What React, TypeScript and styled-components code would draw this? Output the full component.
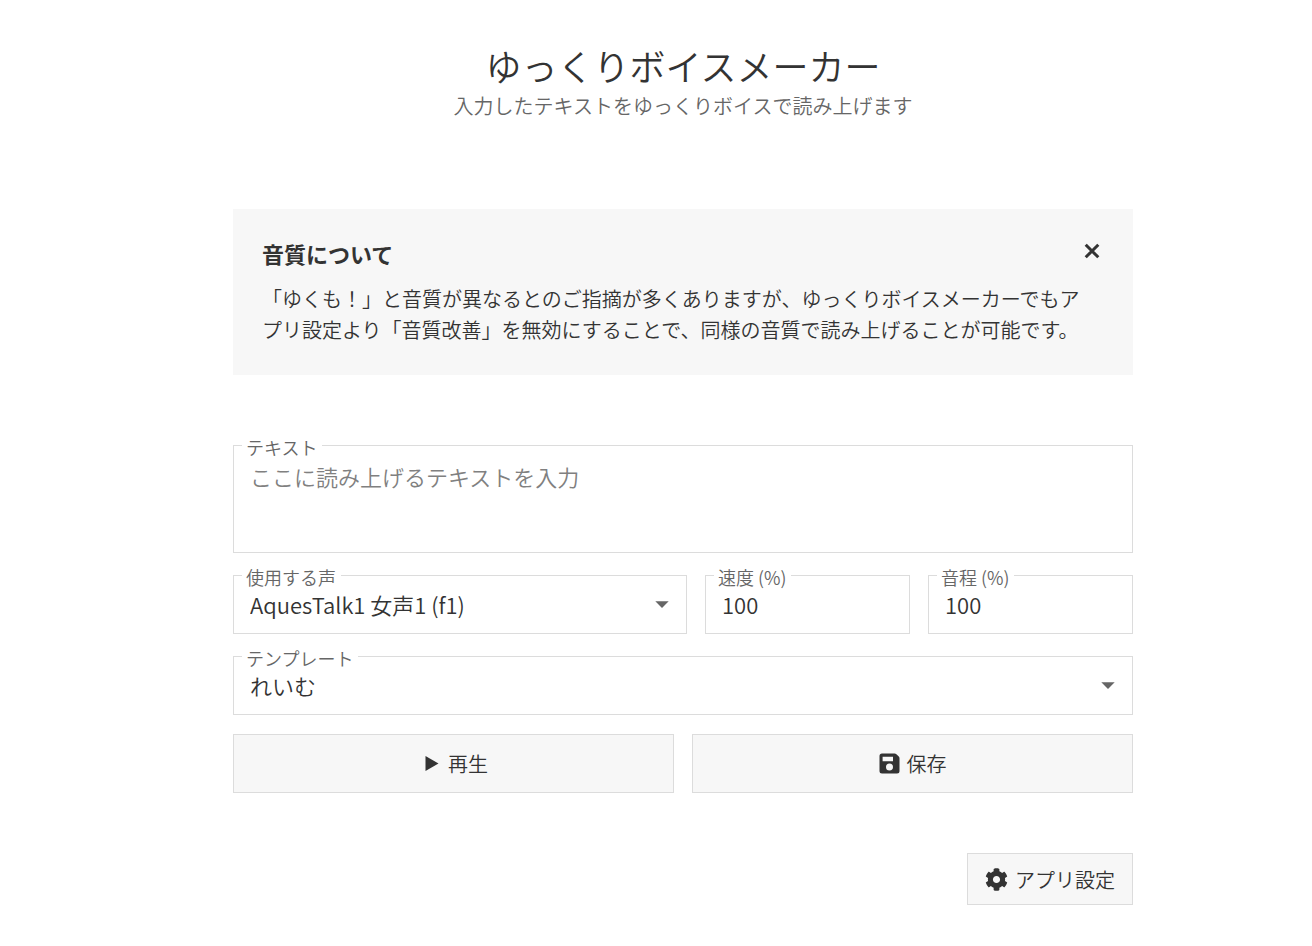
import React, { useState } from "react";
import styled, { createGlobalStyle } from "styled-components";
import { FaCog } from "react-icons/fa";
import { MdArrowDropDown } from "react-icons/md";

const GlobalStyle = createGlobalStyle`
  *, *::before, *::after { box-sizing: border-box; }
  body {
    margin: 0;
    background: #fff;
    color: #333;
    font-family: "Noto Sans CJK JP", sans-serif;
    font-weight: 350;
    font-size: 20px;
    line-height: 31px;
  }
  button, input, select, textarea { font: inherit; color: inherit; }
`;

const Page = styled.main`
  padding: 40px 0 40px 54px;
`;

const Container = styled.div`
  max-width: 900px;
  margin: 0 auto;
`;

const Header = styled.header`
  margin-bottom: 88px;
  text-align: center;
`;

const Title = styled.h1`
  margin: 0;
  font-size: 36px;
  font-weight: 350;
  line-height: 50px;
`;

const Subtitle = styled.p`
  margin: 0;
  color: #666;
`;

const Notice = styled.section`
  margin-bottom: 70px;
  padding: 30px 29px;
  background: #f7f7f7;
`;

const NoticeHead = styled.div`
  display: flex;
  align-items: flex-start;
  justify-content: space-between;
  margin-bottom: 16px;
`;

const NoticeTitle = styled.h2`
  margin: 0;
  font-size: 22px;
  font-weight: 700;
  line-height: 28px;
`;

const NoticeText = styled.p`
  max-width: 41em;
  margin: 0;
`;

const CloseButton = styled.button`
  display: flex;
  padding: 0;
  border: 0;
  background: none;
  cursor: pointer;
`;

const Form = styled.form`
  display: grid;
  gap: 22px;
`;

const FieldRow = styled.div`
  display: grid;
  grid-template-columns: minmax(0, 1fr) 205px 205px;
  gap: 18px;
`;

const Field = styled.div`
  position: relative;
  display: grid;
`;

const Label = styled.label`
  position: absolute;
  top: -10px;
  left: 9px;
  padding: 0 5px 0 4px;
  background: #fff;
  color: #666;
  font-size: 18px;
  line-height: 24px;
`;

const Arrow = styled(MdArrowDropDown)`
  position: absolute;
  top: 13px;
  right: 9px;
  color: #666;
  pointer-events: none;
`;

const controlStyle = `
  width: 100%;
  border: 1px solid #dcdcdc;
  border-radius: 0;
  background: transparent;
  font-size: 22px;
  line-height: 32px;
  outline: none;
  appearance: none;
`;

const TextArea = styled.textarea`
  ${controlStyle}
  height: 108px;
  padding: 14px 16px;
  resize: none;
  &::placeholder { color: #808080; }
`;

const Input = styled.input`
  ${controlStyle}
  height: 59px;
  padding: 0 16px 1px;
`;

const Select = styled.select`
  ${controlStyle}
  height: 59px;
  padding: 0 48px 2px 16px;
`;

const Actions = styled.div`
  display: grid;
  grid-template-columns: 1fr 1fr;
  gap: 18px;
  margin-top: -3px;
`;

const Button = styled.button<{ $compact?: boolean }>`
  display: flex;
  align-items: center;
  justify-content: center;
  gap: 7px;
  height: ${(p) => (p.$compact ? 52 : 59)}px;
  padding: 0 17px;
  border: 1px solid #dcdcdc;
  background: #f7f7f7;
  cursor: pointer;
`;

const Footer = styled.footer`
  display: flex;
  justify-content: flex-end;
  margin-top: 60px;
`;

const PlayIcon = () => (
  <svg width="22" height="24" viewBox="0 0 22 24" aria-hidden="true">
    <path d="M6.500 4v15l13-7.500z" fill="currentColor" />
  </svg>
);

const SaveIcon = () => (
  <svg width="21" height="22" viewBox="0 0 21 22" aria-hidden="true">
    <path
      fill="currentColor"
      fillRule="evenodd"
      d="M3 .5h12.600a2.500 2.500 0 0 1 1.800.7l2.400 2.400a2.500 2.500 0 0 1 .7 1.800V18a2.500 2.500 0 0 1-2.500 2.500H3A2.500 2.500 0 0 1 .5 18V3A2.500 2.500 0 0 1 3 .5zM3.600 3.800v4.400h10.400V3.800zM10.500 10.500a3.500 3.500 0 1 0 0 7 3.500 3.500 0 0 0 0-7z"
    />
  </svg>
);

const CloseIcon = () => (
  <svg width="24" height="24" viewBox="0 0 24 24" aria-hidden="true">
    <path d="M5.700 5.700l12.600 12.600M18.300 5.700L5.700 18.300" stroke="currentColor" strokeWidth="3" />
  </svg>
);

export default function App() {
  const [text, setText] = useState("");
  const [noticeOpen, setNoticeOpen] = useState(true);

  return (
    <Page>
      <GlobalStyle />
      <Container>
        <Header>
          <Title>ゆっくりボイスメーカー</Title>
          <Subtitle>入力したテキストをゆっくりボイスで読み上げます</Subtitle>
        </Header>
        {noticeOpen && (
          <Notice>
            <NoticeHead>
              <NoticeTitle>音質について</NoticeTitle>
              <CloseButton type="button" aria-label="閉じる" onClick={() => setNoticeOpen(false)}>
                <CloseIcon />
              </CloseButton>
            </NoticeHead>
            <NoticeText>
              「ゆくも！」と音質が異なるとのご指摘が多くありますが、ゆっくりボイスメーカーでもアプリ設定より「音質改善」を無効にすることで、同様の音質で読み上げることが可能です。
            </NoticeText>
          </Notice>
        )}
        <Form onSubmit={(e) => e.preventDefault()}>
          <Field>
            <TextArea
              id="text"
              placeholder="ここに読み上げるテキストを入力"
              value={text}
              onChange={(e) => setText(e.target.value)}
            />
            <Label htmlFor="text">テキスト</Label>
          </Field>
          <FieldRow>
            <Field>
              <Select id="voice">
                <option>AquesTalk1 女声1 (f1)</option>
              </Select>
              <Label htmlFor="voice">使用する声</Label>
              <Arrow size={32} />
            </Field>
            <Field>
              <Input id="speed" inputMode="numeric" defaultValue="100" />
              <Label htmlFor="speed">速度 (%)</Label>
            </Field>
            <Field>
              <Input id="pitch" inputMode="numeric" defaultValue="100" />
              <Label htmlFor="pitch">音程 (%)</Label>
            </Field>
          </FieldRow>
          <Field>
            <Select id="template">
              <option>れいむ</option>
            </Select>
            <Label htmlFor="template">テンプレート</Label>
            <Arrow size={32} />
          </Field>
          <Actions>
            <Button type="button">
              <PlayIcon />
              再生
            </Button>
            <Button type="button">
              <SaveIcon />
              保存
            </Button>
          </Actions>
        </Form>
        <Footer>
          <Button type="button" $compact>
            <FaCog size={23} />
            アプリ設定
          </Button>
        </Footer>
      </Container>
    </Page>
  );
}
